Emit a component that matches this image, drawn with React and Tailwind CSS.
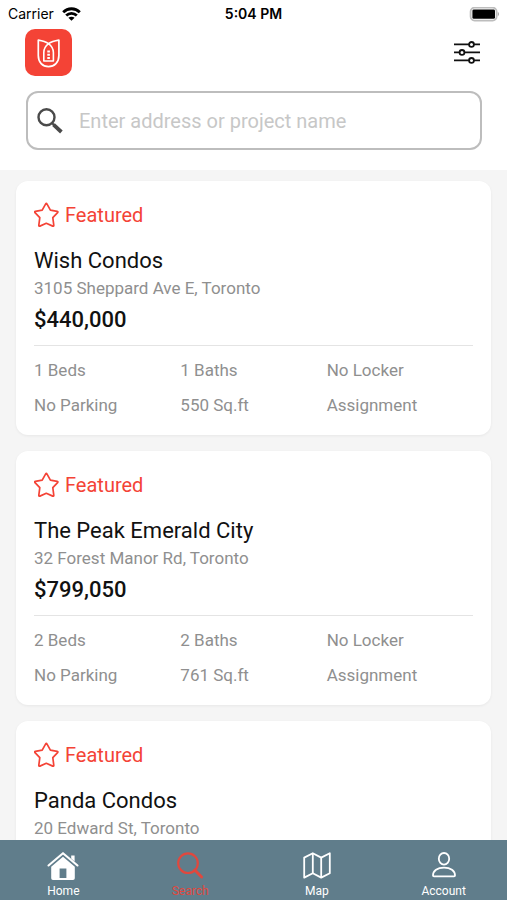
import { useState } from "react";

const listings = [
  {
    id: 1,
    name: "Wish Condos",
    address: "3105 Sheppard Ave E, Toronto",
    price: "$440,000",
    details: ["1 Beds", "1 Baths", "No Locker", "No Parking", "550 Sq.ft", "Assignment"],
  },
  {
    id: 2,
    name: "The Peak Emerald City",
    address: "32 Forest Manor Rd, Toronto",
    price: "$799,050",
    details: ["2 Beds", "2 Baths", "No Locker", "No Parking", "761 Sq.ft", "Assignment"],
  },
  {
    id: 3,
    name: "Panda Condos",
    address: "20 Edward St, Toronto",
  },
];

function StatusBar() {
  return (
    <div className="grid grid-cols-3 items-center h-7 px-2 font-['Inter',sans-serif] text-sm text-black">
      <div className="flex items-center gap-2">
        <span>Carrier</span>
        <svg width="19" height="14" viewBox="0 0 19 14" fill="none" stroke="#000" strokeWidth="2.8">
          <path d="M1.2 5.2C5.8 0.6 13.2 0.6 17.8 5.2" />
          <path d="M4.2 8.5C7.2 5.6 11.8 5.6 14.8 8.5" />
          <path d="M9.5 13.8L6.4 10.8C8.2 9.4 10.8 9.4 12.6 10.8Z" fill="#000" stroke="none" />
        </svg>
      </div>
      <span className="text-center font-semibold">5:04 PM</span>
      <svg className="justify-self-end" width="30" height="15" viewBox="0 0 30 15">
        <rect x="1.6" y="0.6" width="26" height="13" rx="4" fill="#fff" stroke="#bdbdbd" strokeWidth="1.8" />
        <rect x="3.4" y="2.4" width="22.6" height="9.4" rx="1.4" fill="#000" />
        <path d="M28.8 5C30.4 5.6 30.4 8.6 28.8 9.2Z" fill="#aaa" />
      </svg>
    </div>
  );
}

function Logo() {
  return (
    <svg width="47" height="47" viewBox="0 0 47 47" fill="none" stroke="#fff" strokeLinejoin="round">
      <rect width="47" height="47" rx="10" fill="#f44336" stroke="none" />
      <path
        d="M23.5 14.6C20.8 12.8 17 11.8 13.3 11.2V26.5C13.3 33.5 17.5 37.6 23.5 37.6S33.9 33.5 33.9 26.5V11.2C30 11.8 26.2 12.8 23.5 14.6Z"
        strokeWidth="1.7"
      />
      <path d="M23.5 14.6C20.4 17 18.8 19.8 18.8 23.5V32H28.4V23.5C28.4 19.8 26.7 17 23.5 14.6Z" strokeWidth="1.6" />
      <path d="M23.6 21.5V31" strokeWidth="2.6" strokeDasharray="2 1.2" />
    </svg>
  );
}

function FilterIcon() {
  return (
    <svg width="28" height="24" viewBox="0 0 28 24" fill="#fff" stroke="#111" strokeWidth="1.8">
      <path d="M1 3.4H27M1 11.4H27M1 19.4H27" />
      <circle cx="18.5" cy="3.4" r="2.4" />
      <circle cx="9" cy="11.4" r="2.4" />
      <circle cx="18.5" cy="19.4" r="2.4" />
    </svg>
  );
}

function Header() {
  const [query, setQuery] = useState("");

  return (
    <header className="bg-white pb-5">
      <StatusBar />
      <div className="flex items-center justify-between pl-[25px] pr-[26px] pt-px">
        <Logo />
        <button type="button" aria-label="Filters">
          <FilterIcon />
        </button>
      </div>
      <label className="flex items-center gap-4 h-[59px] mt-[15px] ml-[26px] mr-[25px] pl-[9px] pr-4 border-2 border-[#bdbdbd] rounded-xl">
        <svg width="26" height="26" viewBox="0 0 26 26" fill="none" stroke="#4a4a4a">
          <circle cx="9.5" cy="9.3" r="8" strokeWidth="2.4" />
          <path d="M15 15L17.5 17.5" strokeWidth="2.2" />
          <path d="M16.5 16.6L24.4 24" strokeWidth="3.8" />
        </svg>
        <input
          type="text"
          aria-label="Address or project name"
          placeholder="Enter address or project name"
          value={query}
          onChange={(e) => setQuery(e.target.value)}
          className="flex-1 min-w-0 text-xl text-black placeholder:text-[#c7c7c7] outline-none"
        />
      </label>
    </header>
  );
}

function ListingCard({ listing }) {
  return (
    <article className="bg-white rounded-xl shadow-[0_1px_3px_rgba(0,0,0,0.06)] px-[18px] pt-5 pb-[18px]">
      <div className="flex items-center gap-[6px] h-7 text-xl text-[#f44336]">
        <svg width="25" height="26" viewBox="0 0 25 26" fill="none" stroke="#f44336" strokeWidth="1.7" strokeLinejoin="round">
          <path d="M11.7 1.9Q12.3 0.8 12.9 1.9L16.4 8.2L23.2 9.4Q24.4 9.7 23.6 10.6L18.8 15.7L19.8 23.3Q19.8 24.5 18.7 24.1L12.3 21.3L5.9 24.1Q4.8 24.5 4.8 23.3L5.8 15.7L1 10.6Q0.2 9.7 1.4 9.4L8.2 8.2Z" />
        </svg>
        <span>Featured</span>
      </div>
      <h2 className="mt-[18px] text-[22px] leading-7 text-[#111]">{listing.name}</h2>
      <p className="mt-px text-[17px] leading-6 text-[#8f8f8f]">{listing.address}</p>
      {listing.price && (
        <p className="mt-[6px] text-[22px] leading-7 font-medium text-[#111]">{listing.price}</p>
      )}
      {listing.details && (
        <ul className="grid grid-cols-3 gap-y-[11px] mt-[11px] pt-3 border-t border-[#e4e4e4] text-[17px] leading-6 text-[#8f8f8f]">
          {listing.details.map((item) => (
            <li key={item}>{item}</li>
          ))}
        </ul>
      )}
    </article>
  );
}

function HomeIcon() {
  return (
    <svg width="32" height="30" viewBox="0 0 32 30" fill="none">
      <path d="M1.5 14.5L16 2.2L30.5 14.5" stroke="#fff" strokeWidth="2.1" strokeLinecap="round" strokeLinejoin="round" />
      <path d="M24.2 4.6H27.6V10.4L24.2 7.6Z" fill="#fff" />
      <path
        d="M16 5.8L27.8 15.8V27.2Q27.8 29 26 29H6Q4.2 29 4.2 27.2V15.8ZM12.6 17.6V27H19.4V17.6Z"
        fill="#fff"
        fillRule="evenodd"
      />
    </svg>
  );
}

function SearchIcon() {
  return (
    <svg width="28" height="28" viewBox="0 0 28 28" fill="none" stroke="currentColor">
      <circle cx="12" cy="11.2" r="9.8" strokeWidth="2.2" />
      <path d="M18.8 18L25.6 25" strokeWidth="3" strokeLinecap="round" />
    </svg>
  );
}

function MapIcon() {
  return (
    <svg width="28" height="28" viewBox="0 0 28 28" fill="none" stroke="#fff" strokeWidth="1.8" strokeLinejoin="round">
      <path d="M1.2 5.6L9.8 1.2L18.2 5.6L26.8 1.2V21.2L18.2 25.6L9.8 21.2L1.2 25.6Z" />
      <path d="M9.8 1.2V21.2M18.2 5.6V25.6" />
    </svg>
  );
}

function AccountIcon() {
  return (
    <svg width="26" height="28" viewBox="0 0 26 28" fill="none" stroke="#fff" strokeWidth="1.8" strokeLinejoin="round">
      <ellipse cx="13" cy="6.8" rx="5.2" ry="5.8" />
      <path d="M2 23.6C2 18.8 6.4 15.6 13 15.6S24 18.8 24 23.6Q24 24.4 23 24.4H3Q2 24.4 2 23.6Z" />
    </svg>
  );
}

const tabs = [
  { label: "Home", Icon: HomeIcon },
  { label: "Search", Icon: SearchIcon },
  { label: "Map", Icon: MapIcon },
  { label: "Account", Icon: AccountIcon },
];

function TabBar() {
  return (
    <nav className="grid grid-cols-4 h-[60px] shrink-0 bg-[#607d8b] text-xs text-white">
      {tabs.map(({ label, Icon }) => (
        <a
          key={label}
          href={"#" + label.toLowerCase()}
          aria-current={label === "Search" ? "page" : undefined}
          className="flex flex-col items-center pt-[11px] aria-[current=page]:text-[#e0483e]"
        >
          <span className="flex items-center h-[30px]">
            <Icon />
          </span>
          <span className="mt-[2px] leading-4">{label}</span>
        </a>
      ))}
    </nav>
  );
}

export default function App() {
  return (
    <div className="flex flex-col h-screen bg-[#f5f5f5] font-['Roboto',sans-serif]">
      <Header />
      <main className="flex-1 min-h-0 overflow-y-auto [scrollbar-width:none] px-4 pt-[11px] space-y-4">
        {listings.map((listing) => (
          <ListingCard key={listing.id} listing={listing} />
        ))}
      </main>
      <TabBar />
    </div>
  );
}
